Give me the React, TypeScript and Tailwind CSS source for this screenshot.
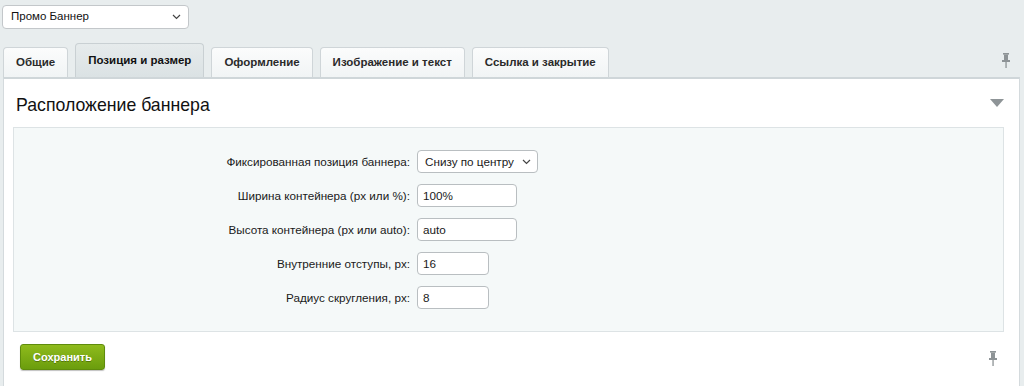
import React from "react";

const Chevron = () => (
  <svg width="9" height="6" viewBox="0 0 9 6" fill="none" className="shrink-0">
    <path d="M1 1l3.5 3.5L8 1" stroke="#444" strokeWidth="1.2" />
  </svg>
);

const Pin = () => (
  <svg width="10" height="15" viewBox="0 0 10 15">
    <rect x="2" y="0" width="6" height="1.6" fill="#8d9396" />
    <rect x="3" y="1.5" width="4" height="5.5" fill="#8d9396" />
    <rect x="1" y="7" width="8" height="2" fill="#8d9396" />
    <rect x="4.4" y="9" width="1.3" height="6" fill="#8d9396" />
  </svg>
);

const tabs = ["Общие", "Позиция и размер", "Оформление", "Изображение и текст", "Ссылка и закрытие"];

export default function App() {
  return (
    <div
      className="w-[1024px] h-[386px] overflow-hidden bg-[#e8edee] text-[#000]"
      style={{ fontFamily: '"Liberation Sans", Arial, sans-serif' }}
    >
      <div className="pt-[5px] pl-[2px]">
        <div className="w-[187px] h-[24px] bg-white border border-[#c3c7ca] rounded-[4px] flex items-center justify-between pl-[8px] pr-[7px] text-[11.5px] text-[#111]">
          <span>Промо Баннер</span>
          <Chevron />
        </div>
      </div>
      <div className="flex items-end pl-[3px] mt-[14px] h-[34px] relative">
        {tabs.map((t, i) =>
          i === 1 ? (
            <div
              key={t}
              className="h-[34px] mr-[7px] px-[12px] flex items-center whitespace-nowrap text-[11.5px] font-bold text-[#111] border border-b-0 border-[#c9d0d3] rounded-t-[4px] bg-[linear-gradient(#e6ebec,#dbe2e4)]"
            >
              {t}
            </div>
          ) : (
            <div
              key={t}
              className="h-[30px] mr-[7px] px-[12px] flex items-center whitespace-nowrap text-[11.5px] font-bold text-[#2a2a2a] border border-b-0 border-[#cfd5d8] rounded-t-[4px] bg-[linear-gradient(#fbfcfc,#f1f4f5)]"
            >
              {t}
            </div>
          )
        )}
        <div className="absolute right-[13px] top-[10px]">
          <Pin />
        </div>
      </div>
      <div className="ml-[3px] mr-[4px] bg-white border border-[#d4dadd] border-t-[2px] border-t-[#cfd6d9] h-[320px] pl-[9px] pr-[15px]">
        <div className="flex items-center justify-between h-[48px] pl-[3px] pr-0">
          <span className="text-[17.7px] text-[#111] pt-[4px]">Расположение баннера</span>
          <svg width="14" height="8" viewBox="0 0 14 8">
            <path d="M0 0h14L7 8z" fill="#8e9497" />
          </svg>
        </div>
        <div className="bg-[#f5f9f9] border border-[#dde3e5] h-[205px] pt-[22px]">
          <div className="grid grid-cols-[396px_1fr] gap-x-[7px] gap-y-[11px] items-center text-[11.7px] text-[#1a1a1a]">
            <div className="text-right whitespace-nowrap">Фиксированная позиция баннера:</div>
            <div className="w-[121px] h-[23px] bg-white border border-[#b9bec1] rounded-[4px] flex items-center justify-between pl-[7px] pr-[6px] whitespace-nowrap">
              <span>Снизу по центру</span>
              <Chevron />
            </div>
            <div className="text-right whitespace-nowrap">Ширина контейнера (px или %):</div>
            <div className="w-[100px] h-[23px] bg-white border border-[#b9bec1] rounded-[4px] flex items-center pl-[5px]">100%</div>
            <div className="text-right whitespace-nowrap">Высота контейнера (px или auto):</div>
            <div className="w-[100px] h-[23px] bg-white border border-[#b9bec1] rounded-[4px] flex items-center pl-[5px]">auto</div>
            <div className="text-right whitespace-nowrap">Внутренние отступы, px:</div>
            <div className="w-[72px] h-[23px] bg-white border border-[#b9bec1] rounded-[4px] flex items-center pl-[5px]">16</div>
            <div className="text-right whitespace-nowrap">Радиус скругления, px:</div>
            <div className="w-[72px] h-[23px] bg-white border border-[#b9bec1] rounded-[4px] flex items-center pl-[5px]">8</div>
          </div>
        </div>
        <div className="flex items-center justify-between pt-[12px] pl-[7px] pr-[6px]">
          <div className="h-[26px] w-[85px] flex items-center justify-center rounded-[3px] bg-[linear-gradient(#8fbb1c,#6b9d0d)] border border-[#5f8c0c] text-white text-[11px] font-bold shadow-[0_1px_1px_rgba(0,0,0,0.25)]" style={{ textShadow: "0 1px 0 rgba(0,0,0,0.3)" }}>
            Сохранить
          </div>
          <div className="pt-[2px]">
            <Pin />
          </div>
        </div>
      </div>
    </div>
  );
}
